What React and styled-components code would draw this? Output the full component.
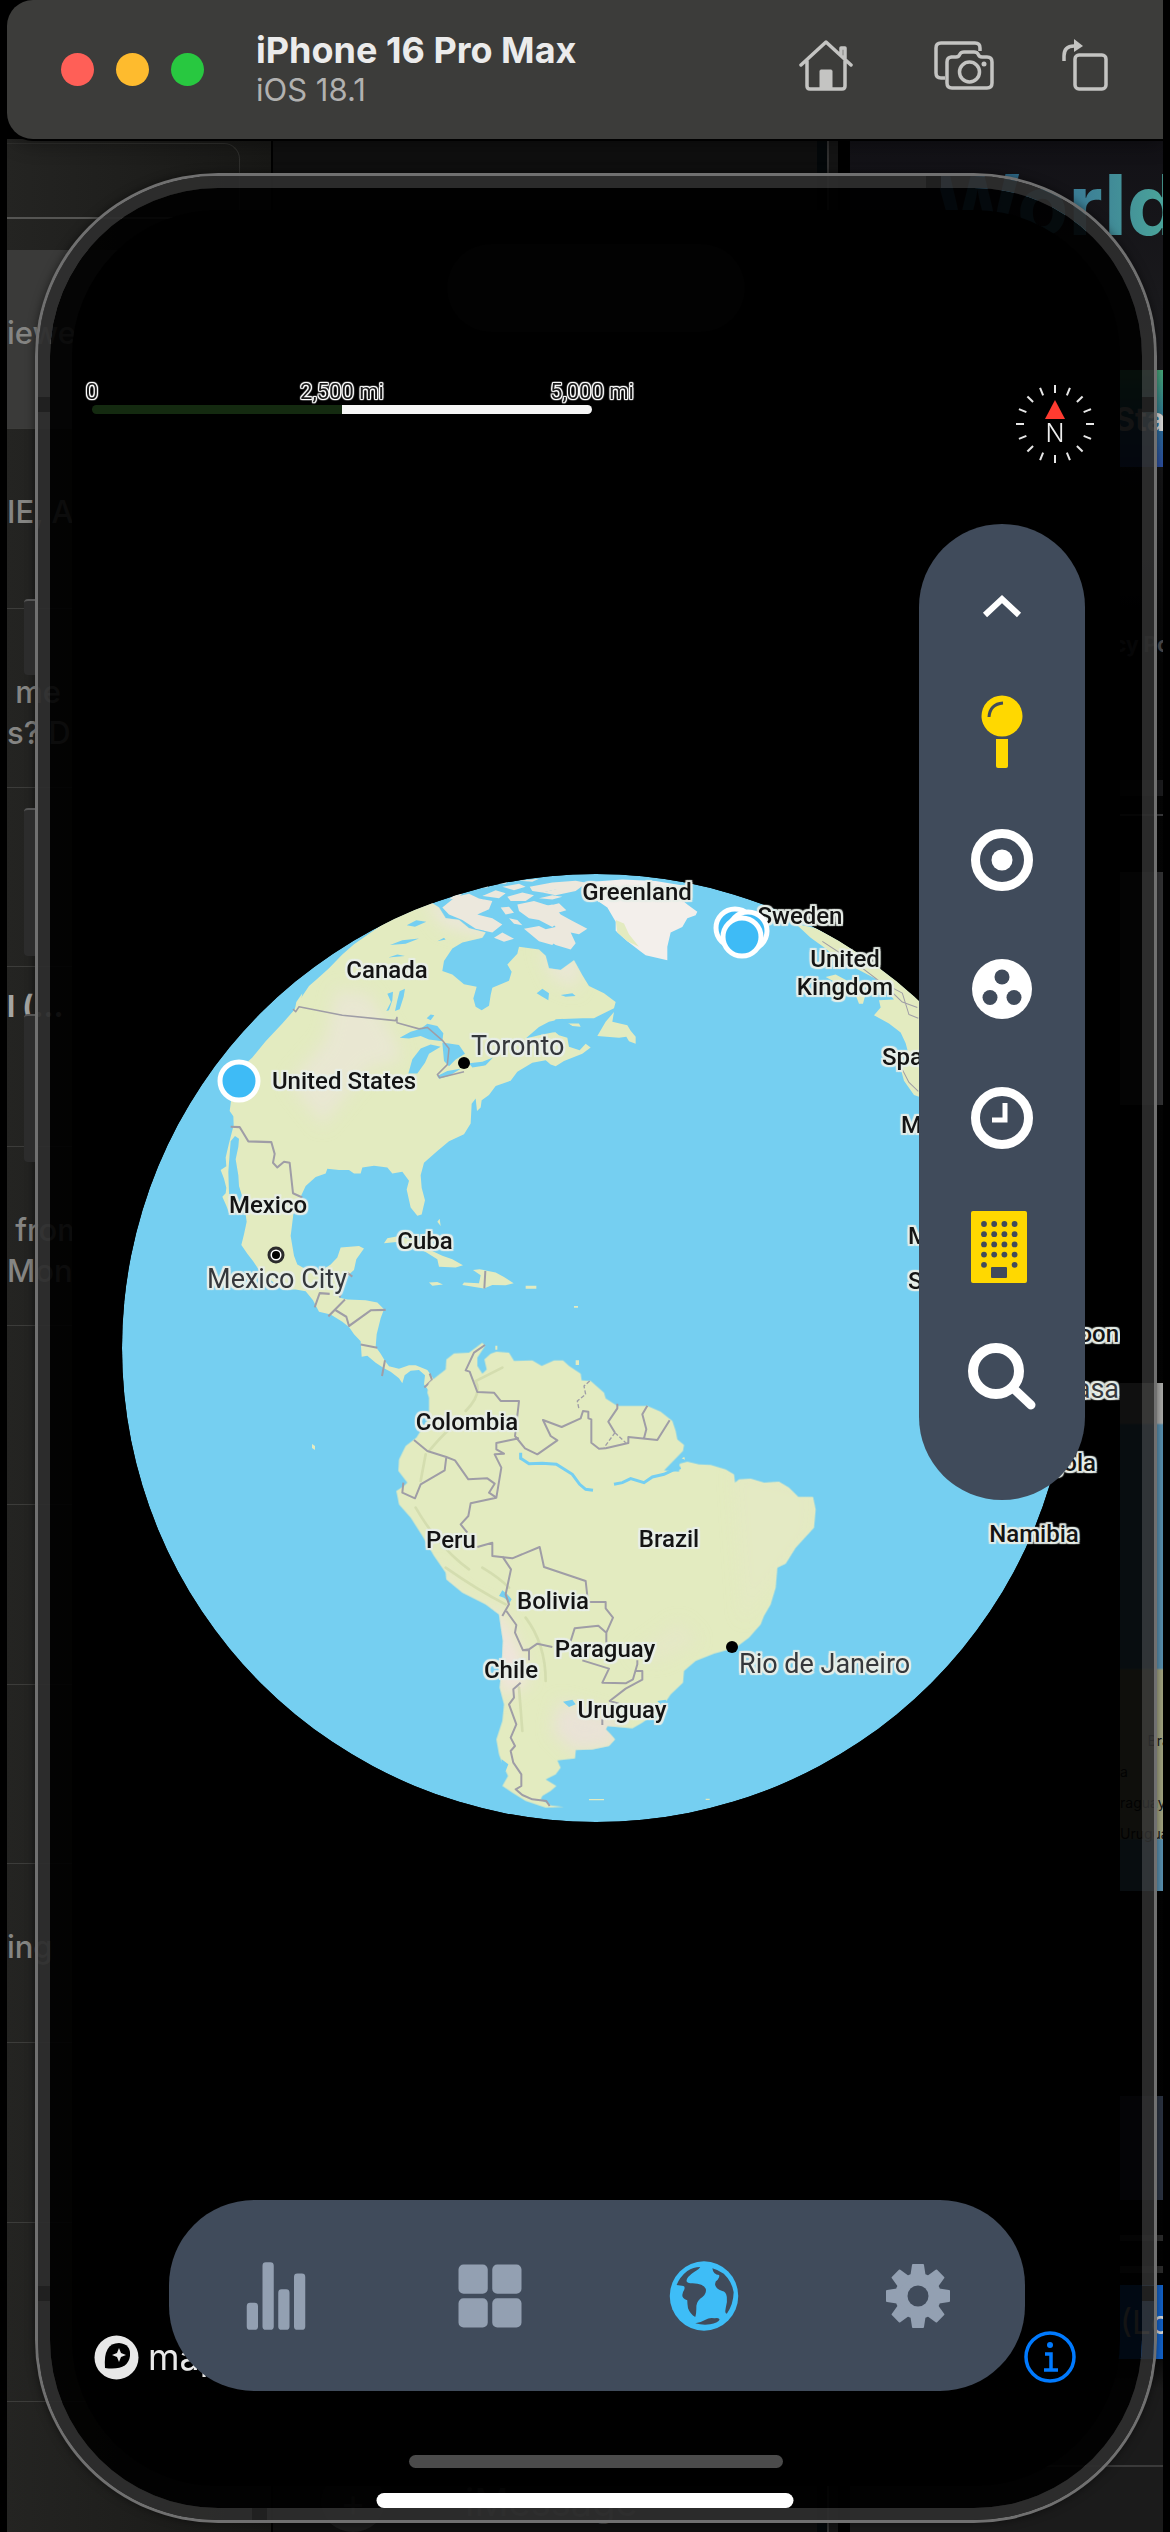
import React from "react";
import styled, { createGlobalStyle } from "styled-components";
import { IoStatsChart, IoGrid } from "react-icons/io5";

const GlobalStyle = createGlobalStyle`
  *, *::before, *::after { box-sizing: border-box; }
  body { margin: 0; background: #000; font-family: Inter, "Liberation Sans", sans-serif; }
  button { border: 0; padding: 0; background: none; color: inherit; font: inherit; cursor: pointer; }
`;

const Page = styled.main`
  position: relative;
  display: flex;
  flex-direction: column;
  min-height: 100vh;
  padding: 0 7px;
  overflow: hidden;
`;

/* Simulator title bar */
const TitleBar = styled.header`
  position: relative;
  z-index: 1;
  display: flex;
  align-items: center;
  height: 139px;
  padding: 0 46px 0 54px;
  background: #3c3c3a;
  border-radius: 26px 0 0 26px;
  box-shadow: 0 1px 0 1px #000, 0 4px 20px rgba(0, 0, 0, 0.4);
`;
const Lights = styled.div`
  display: flex;
  gap: 22px;
  margin-right: 52px;
`;
const Light = styled.button`
  width: 33px;
  height: 33px;
  border-radius: 50%;
  background: ${(p) => p.$color};
`;
const Titles = styled.div`
  flex: 1;
  padding-bottom: 2px;
`;
const DeviceName = styled.h1`
  margin: 0;
  font-size: 36px;
  line-height: 42px;
  font-weight: 700;
  color: #ebebeb;
`;
const OsName = styled.p`
  margin: 0;
  font-size: 31px;
  line-height: 38px;
  color: #b1b1b0;
`;
const BarActions = styled.div`
  display: flex;
  align-items: center;
  gap: 57px;
  margin-top: -8px;
`;
const BarButton = styled.button`
  display: grid;
  place-items: center;
  width: 64px;
  height: 64px;
  margin-right: ${(p) => (p.$wide ? 17 : 0)}px;
  color: #c4c4c2;
`;

/* Windows behind the device */
const Stage = styled.div`
  display: grid;
  grid-template-columns: minmax(0, 1fr);
  flex: 1;
  overflow: hidden;
`;
const Backdrop = styled.div`
  grid-area: 1 / 1;
  display: grid;
  grid-template-columns: 266px minmax(0, 1fr) 313px;
  background: #0f0f0f;
`;
const Sidebar = styled.aside`
  display: flex;
  flex-direction: column;
  overflow: hidden;
  background: linear-gradient(90deg, #242422, #181816);
  border-right: 2px solid #000;
`;
const SearchStrip = styled.div`
  height: 76px;
  margin: 4px 31px 31px 0;
  border: 1px solid #2f2f2d;
  border-left: 0;
  border-bottom: 2px solid #555553;
  border-radius: 0 16px 0 0;
`;
const ChatList = styled.ul`
  flex: 1;
  display: grid;
  grid-auto-rows: 1fr;
  margin: 0 0 130px;
  padding: 0;
  list-style: none;
`;
const Chat = styled.li`
  min-height: 0;
  padding-top: 16px;
  background: ${(p) => (p.$active ? "#3a3a39" : "transparent")};
  border-bottom: 1px solid #3c3c3a;
  white-space: pre;
  color: #858583;
`;
const ChatTitle = styled.strong`
  display: block;
  height: 46px;
  font-size: 30px;
  line-height: 46px;
  color: #a5a5a2;
`;
const ChatText = styled.span`
  display: block;
  font-size: 31px;
  line-height: 41px;
  font-weight: 500;
`;
const Conversation = styled.section`
  display: flex;
  align-items: flex-end;
  justify-content: flex-start;
  gap: 80px;
  padding: 0 0 0 48px;
  border-right: 12px solid #000;
  box-shadow: inset -9px 0 0 #141414, inset -11px 0 0 #303030, inset -21px 0 0 #04080a;
  color: #3a3a3a;
  font-size: 38px;
  line-height: 60px;
`;
const Plus = styled.span`
  width: 64px;
  border-radius: 50%;
  background: #1c1c1c;
  text-align: center;
`;
const Browser = styled.section`
  display: flex;
  flex-direction: column;
  overflow: hidden;
  white-space: nowrap;
  background: linear-gradient(#121116, #1d1d1f 10%, #050505 22%, #020202 92%, #1b1b1b 94%);
`;
const SiteTitle = styled.h2`
  margin: 14px 0 0 84px;
  font-size: 84px;
  line-height: 104px;
  font-weight: 700;
  color: transparent;
  background: linear-gradient(90deg, #235a86 0, #3c7f96 150px, #4aa39a 229px);
  background-clip: text;
`;
const SiteButton = styled.div`
  height: 97px;
  margin-top: 113px;
  padding-left: 264px;
  font-size: 32px;
  line-height: 100px;
  font-weight: 700;
  color: #ddd;
  background: linear-gradient(#46a87a, #2b6c9a 60%, #2c4ea0);
`;
const SiteLink = styled.div`
  margin-top: 166px;
  padding-left: 264px;
  font-size: 21px;
  line-height: 24px;
  font-weight: 700;
  color: #4a4a4e;
`;
const Bar = styled.div`
  height: ${(p) => p.$height}px;
  margin-top: ${(p) => p.$gap}px;
  background: ${(p) => p.$color};
`;
const MiniMap = styled.div`
  height: 508px;
  margin-top: 278px;
  padding: 342px 0 0 270px;
  font-size: 14px;
  line-height: 31px;
  white-space: pre;
  color: #17181a;
  background: linear-gradient(#b0b0ae 40px, #5b93b3 42px, #5b93b3 285px, #a5a784 287px, #a5a784 455px, #5b93b3 457px);
`;
const BlueRow = styled.div`
  height: 74px;
  margin-top: 12px;
  padding-left: 270px;
  font-size: 33px;
  line-height: 74px;
  color: #ddd;
  background: #1263cc;
`;

/* Phone */
const Phone = styled.section`
  grid-area: 1 / 1;
  position: relative;
  display: grid;
  grid-template-columns: minmax(0, 1fr);
  margin: 37px 9px 12px 31px;
  padding: 22px;
  border: 12px solid rgba(45, 45, 45, 0.93);
  border-radius: 180px;
  background: rgba(0, 0, 0, 0.91) padding-box;
  box-shadow: 0 0 0 3px #707070, 0 0 10px 3px rgba(0, 0, 0, 0.5);
`;
const SideKey = styled.i`
  position: absolute;
  left: -26px;
  top: ${(p) => p.$top}px;
  width: 11px;
  height: ${(p) => p.$height}px;
  background: #2c2c2c;
  border-top: 2px solid #555;
  border-radius: 4px 0 0 4px;
`;
const Band = styled.i`
  position: absolute;
  ${(p) => p.$side}: -12px;
  ${(p) => p.$from}: ${(p) => p.$at}px;
  width: ${(p) => (p.$side === "left" || p.$side === "right" ? 12 : 15)}px;
  height: ${(p) => (p.$side === "left" || p.$side === "right" ? 15 : 12)}px;
  background: #202020;
`;
const Screen = styled.div`
  display: grid;
  grid-template-columns: minmax(0, 1fr);
  overflow: hidden;
  border-radius: 146px;
  background: #000;
`;
const MapLayer = styled.div`
  grid-area: 1 / 1;
  display: grid;
  place-items: center;
`;
const Globe = styled.div`
  position: relative;
  width: 948px;
  height: 948px;
  svg { display: block; overflow: visible; }
`;
const HALO = [[2, 0], [-2, 0], [0, 2], [0, -2], [2, 2], [-2, 2], [2, -2], [-2, -2], [0, 0]];
const halo = (color, blur) => HALO.map(([x, y]) => `${x}px ${y}px ${blur}px ${color}`).join(",");

const PlaceLabel = styled.span`
  position: absolute;
  left: ${(p) => p.$x}px;
  top: ${(p) => p.$y}px;
  transform: translate(${(p) => (p.$anchor === "start" ? "0" : p.$anchor === "end" ? "-100%" : "-50%")}, -50%);
  font-family: Roboto, "Liberation Sans", sans-serif;
  font-size: ${(p) => (p.$city ? 27 : 24)}px;
  line-height: 28px;
  font-weight: ${(p) => (p.$city ? 400 : 500)};
  color: ${(p) => (p.$city ? "#35383c" : "#141414")};
  white-space: pre;
  text-align: center;
  text-shadow: ${halo("rgba(232, 238, 232, 0.95)", 1)};
`;

const Controls = styled.div`
  grid-area: 1 / 1;
  position: relative;
  z-index: 1;
  display: flex;
  flex-direction: column;
  padding: 34px 0 18px;
`;
const Island = styled.div`
  align-self: center;
  width: 298px;
  height: 88px;
  border-radius: 44px;
  background: #020202;
`;
const MapHeader = styled.div`
  display: flex;
  justify-content: space-between;
  align-items: flex-start;
  padding: 50px 23px 0 11px;
`;
const Scale = styled.div`
  width: 518px;
`;
const ScaleLabels = styled.div`
  display: grid;
  grid-template-columns: 18px 1fr 18px;
  justify-items: center;
  white-space: nowrap;
  font-family: Roboto, "Liberation Sans", sans-serif;
  font-size: 22px;
  line-height: 20px;
  color: #1c1c1c;
  text-shadow: ${HALO.map(([x, y]) => `${x / 2}px ${y / 2}px 1px #fff`).join(",")};
`;
const ScaleTrack = styled.div`
  width: 500px;
  height: 9px;
  margin: 3px 0 0 9px;
  border-radius: 5px;
  background: linear-gradient(90deg, #142a10 50%, #f6f6f6 50%);
`;
const CompassButton = styled.button`
  position: relative;
  display: grid;
  width: 84px;
  height: 84px;
  svg { grid-area: 1 / 1; }
`;
const North = styled.span`
  grid-area: 1 / 1;
  align-self: end;
  margin-bottom: 20px;
  font-size: 25px;
  line-height: 26px;
  font-weight: 300;
  color: #eee;
`;
const ToolPanel = styled.div`
  align-self: flex-end;
  display: flex;
  flex-direction: column;
  width: 166px;
  margin: 58px 35px 0 0;
  padding: 13px 0 60px;
  border-radius: 83px;
  background: #404b5b;
`;
const ToolButton = styled.button`
  display: grid;
  place-items: center;
  height: 129px;
  color: ${(p) => (p.$active ? "#ffd800" : "#fff")};
`;
const Footer = styled.footer`
  display: grid;
  grid-template-columns: minmax(0, 1fr);
  margin-top: auto;
`;
const Attribution = styled.div`
  grid-area: 1 / 1;
  display: flex;
  align-items: center;
  align-self: end;
  justify-content: space-between;
  padding: 0 43px 7px 22px;
`;
const Brand = styled.a`
  display: flex;
  align-items: center;
  gap: 9px;
  color: #e8e8e8;
  font-size: 36px;
  line-height: 42px;
  text-decoration: none;
`;
const InfoButton = styled.button`
  width: 54px;
  height: 54px;
`;
const TabBar = styled.nav`
  grid-area: 1 / 1;
  position: relative;
  display: grid;
  grid-template-columns: repeat(4, 1fr);
  height: 191px;
  margin: 0 95px 0 97px;
  border-radius: 85px;
  background: #404b5b;
`;
const Tab = styled.button`
  display: grid;
  place-items: center;
  color: ${(p) => (p.$active ? "#3ebdf7" : "#93a0b2")};
`;
const Indicator = styled.div`
  align-self: center;
  width: 374px;
  height: 13px;
  margin-top: 64px;
  border-radius: 7px;
  background: #4b4b4b;
`;
const HomeBar = styled.div`
  position: absolute;
  bottom: 24px;
  left: 50%;
  width: 417px;
  height: 15px;
  transform: translateX(-50%);
  border-radius: 8px;
  background: #fff;
`;

const LAND = "#e3ebc0";
const WATER = "#75cff1";

function World() {
  return (
    <svg width="948" height="948" viewBox="123 873 948 948" aria-hidden="true">
      <defs>
        <clipPath id="disc"><circle cx="597" cy="1347" r="474" /></clipPath>
        <filter id="soft" x="-30%" y="-30%" width="160%" height="160%"><feGaussianBlur stdDeviation="24" /></filter>
        <clipPath id="south">
          <path d={SOUTH} />
        </clipPath>
        <clipPath id="north">
          <path d={NORTH} />
        </clipPath>
      </defs>
      <g clipPath="url(#disc)">
        <circle cx="597" cy="1347" r="474" fill={WATER} />
        <g transform="translate(110 860) scale(.33333 .35714)">
          <path fill={LAND} d={NORTH} />
          <g clipPath="url(#north)" >
            <g filter="url(#soft)" fill="#ebe6da">
              <path d="M680 360L780 370L860 500L880 560L780 580L640 740L540 620L650 500Z" opacity=".7" />
              <path d="M940 100L1160 150L1200 215L1090 205L1000 180Z" />
              <path d="M1290 240L1430 270L1400 360L1330 330Z" opacity=".8" />
            </g>
          </g>
          <g fill="#ece8dd">
            <path d="M1000 130L1040 100L1080 92L1110 105L1150 112L1140 135L1105 150L1150 160L1180 178L1150 200L1100 190L1060 165L1020 150Z" />
            <path d="M1120 98L1160 82L1190 90L1170 104ZM1180 72L1230 64L1250 72L1215 82ZM1195 100L1240 88L1275 96L1250 112L1205 112ZM1262 72L1330 60L1400 55L1440 62L1400 76L1340 80L1300 88L1270 84ZM1225 122L1275 112L1320 125L1350 118L1372 138L1330 150L1350 170L1330 185L1290 165L1260 160L1230 140ZM1155 215L1180 200L1215 218L1185 226ZM1175 130L1200 128L1215 145L1190 150Z" />
            <path d="M1245 190L1290 182L1320 195L1345 215L1330 235L1290 225ZM1290 130L1330 122L1355 150L1385 165L1435 190L1410 205L1385 200L1400 230L1385 248L1340 235L1300 212L1290 195L1340 185Z" />
            <path d="M1300 88L1370 72L1420 70L1400 84L1340 96ZM1290 104L1330 96L1360 100L1330 108Z" />
            <path d="M1050 82L1080 76L1075 84ZM1100 74L1140 66L1135 74ZM1160 62L1200 56L1190 64ZM1230 55L1290 50L1270 58ZM1060 92L1035 96L1020 108L1045 104ZM1200 160L1225 165L1240 180L1215 176Z" />
          </g>
          <path fill="#f3efeb" d="M1420 75L1450 58L1540 52L1640 56L1730 70L1750 95L1720 110L1735 122L1765 142L1760 152L1735 160L1720 185L1685 200L1675 240L1675 278L1610 264L1590 250L1555 225L1520 195L1520 170L1495 130L1460 108Z" />
          <path fill={LAND} d="M1520 165L1545 175L1560 205L1590 240L1555 225L1525 200Z" />
          <path fill={LAND} d="M1465 490L1490 450L1515 423L1510 450L1555 460L1565 475L1580 492L1580 512L1560 505L1552 492L1530 495ZM1375 455L1410 455L1415 464L1390 462Z" />
          <path fill={LAND} d="M2060 176L2120 188L2220 235L2430 370L2430 660L2415 655L2385 615L2373 575L2400 545L2390 510L2375 480L2340 455L2295 432L2315 410L2310 390L2355 388L2330 360L2300 330L2240 300L2190 280L2150 245L2105 215Z" />
          <path fill={LAND} d="M2150 325L2180 318L2215 335L2250 350L2270 372L2262 400L2250 400L2240 375L2200 350Z" />
          <g fill={LAND}>
            <path d="M825 1070L835 1056L870 1050L910 1062L960 1088L1000 1105L1030 1115L1062 1132L1040 1138L990 1136L985 1115L950 1095L870 1066Z" />
            <path d="M1092 1145L1112 1143L1160 1152L1185 1165L1214 1182L1190 1188L1150 1187L1125 1197L1060 1187L1065 1180L1110 1182L1115 1160ZM960 1180L985 1179L1002 1186L970 1189ZM1250 1189H1282V1198H1250ZM985 1010L992 1002L995 1022ZM1395 1246H1407V1251H1395Z" />
            <path d="M580 370L575 400L558 415L562 395Z" />
          </g>
          <g fill={WATER}>
            <path d="M872 495L905 478L935 470L955 456L985 462L1003 482L1000 505L960 500L935 490L900 497ZM953 440L965 430L976 432L965 446ZM898 595L910 555L935 525L965 514L995 520L960 540L948 565L925 595ZM1000 508L1050 515L1068 540L1040 556L1020 575L1005 560ZM985 602L1015 588L1055 582L1020 602L990 610ZM1080 566L1120 562L1152 550L1130 572L1090 578Z" />
            <path d="M1250 497L1290 465L1320 450L1360 442L1400 470L1365 477L1330 480L1290 488ZM832 420L846 395L835 372L852 366L850 390L840 418ZM858 420L865 390L872 365L888 358L884 380L872 415ZM843 235L880 222L930 217L890 232ZM893 180L922 166L952 170L918 184ZM838 270L865 262L888 266ZM985 225L1005 215L1010 220ZM1283 370L1300 358L1320 370L1318 390L1300 380ZM1355 375L1390 370L1400 378L1370 380Z" />
          </g>
          <g fill="none" stroke="#9f9da6" strokeWidth="6" strokeLinejoin="round">
            <path strokeWidth="4.500" d="M552 415L560 422L570 408L700 432L860 447L864 438L864 453L930 470L955 466L1000 502L1020 525L1015 570L985 598L992 607L1065 590" />
            <path d="M365 744L392 745L418 785L487 787L497 820L492 845L505 858L525 842L542 845L552 930L580 942M617 1250L632 1210L662 1212M692 1222L708 1168L718 1155L730 1164M658 1275L708 1228M680 1258L712 1276L720 1302L785 1258L830 1257M755 1354L805 1363M828 1398L819 1442M962 1435L969 1453L946 1474M1129 1148L1126 1197" />
            <path strokeWidth="3" d="M2140 225L2200 262L2260 300L2330 350L2380 395L2425 410M2300 330L2380 370L2400 430L2428 440M2375 575L2400 620L2428 645" />
          </g>
        </g>
        <g transform="translate(360 1320) scale(.33333)">
          <path fill={LAND} d={SOUTH} />
          <g clipPath="url(#south)">
            <g filter="url(#soft)">
              <path fill="#f0e4de" d="M225 720L300 820L430 880L480 980L510 1080L430 1130L395 880L260 800Z" />
              <path fill="#e9e2d6" d="M600 1140L780 1190L770 1280L640 1290L580 1230Z" />
              <path fill="#e8e6ce" d="M960 900L1020 960L900 1020L820 1000Z" opacity=".5" />
              <path fill="#e8e8cc" d="M1120 440L1370 500L1360 640L1150 900Z" opacity=".3" />
            </g>
            <path fill="none" stroke="#c9d3a4" strokeWidth="8" opacity=".6" strokeLinecap="round" d="M320 270Q370 220 350 180L430 140M210 390Q260 330 290 310M185 480L200 400M170 560Q240 680 330 745M260 740Q360 810 440 850M500 890Q560 970 560 1080M480 1100L490 1230M370 740Q420 770 450 800" />
          </g>
          <path fill={WATER} d="M420 825L430 808L445 820L458 835L452 845L435 830ZM612 1142L640 1136L650 1150L630 1158ZM895 1140L920 1136L925 1146L905 1152ZM428 1315L448 1330L440 1350L425 1345Z" />
          <path fill="none" stroke={WATER} strokeWidth="9" d="M485 395V412L510 428L550 427L592 430L640 460L662 490L680 505L702 508M765 490L790 485L815 473L855 485L880 468L915 460L940 448L965 440" />
          <path fill={LAND} d="M650 118H660V132H650ZM690 1434H735V1438H690ZM1040 1433H1052V1437H1040ZM409 74H415V86H409ZM968 412L976 408L978 416Z" />
          <g fill="none" stroke="#9f9da6" strokeWidth="6" strokeLinejoin="round">
            <path d="M378 72L345 95L320 148L332 152L355 213L405 215L425 240L480 240L468 345L498 382L535 400L595 358L575 345L552 297L608 318L665 292L672 270L688 272V292L697 295V365L720 383L740 382L808 366V348L895 357L932 298M775 248V262L748 302L768 335M865 254L850 280L862 325L855 352M165 357L205 390L262 408L288 418L328 475L385 472L407 488L390 515L412 530L427 440L407 400L435 398L412 385V366L480 352M262 408L257 448L185 490L168 532L130 515L133 485M412 530L335 547L328 585L305 610L325 635M355 678L400 665V705L460 712L542 678L555 738L680 780L687 843H740V862L762 890L742 935V965M430 706L456 745L440 820L450 850L430 885M442 870L472 912L468 935L492 988H510V1018M492 988L510 985L535 968L580 978M635 960L647 922L718 914L742 935M670 1018L750 1043L730 1085L800 1087L822 1075L835 1030V1018M830 1050H850V1076L800 1103L752 1140L780 1148M485 1085L463 1105L465 1130L450 1150L472 1210L455 1250L468 1275L455 1290L463 1325L487 1360V1395L470 1405L490 1422L520 1435L562 1440L572 1455M730 1195V1212" />
            <path strokeWidth="4" strokeDasharray="12 6" d="M692 180L675 195L680 220L655 240L660 265M768 335L800 365M768 335L735 380" />
          </g>
        </g>
      </g>
      <path d="M313 1443l3 2v4l-3-2z" fill={LAND} />
      <circle cx="465" cy="1062" r="6" /><circle cx="733" cy="1646" r="6" />
      <circle cx="277" cy="1254" r="7" fill="#fff" stroke="#2b2b2b" strokeWidth="3" /><circle cx="277" cy="1254" r="4" />
    </svg>
  );
}

const NORTH =
  "M735 233L700 262L660 300L625 330L600 350L580 378L555 418L520 455L470 505L430 550L395 580L370 640L365 680L362 700L373 715L374 740L360 790L350 830L352 855L335 865L345 890L352 915L350 930L340 940L352 965L362 990L358 870L365 785L378 770L390 778L388 800L380 835L388 880L390 910L400 940L410 990L413 1010L405 1045L397 1075L415 1100L432 1120L450 1145L480 1170L520 1200L560 1200L590 1205L612 1230L630 1262L665 1270L700 1290L720 1305L735 1325L755 1345L758 1388L775 1385L800 1405L825 1420L845 1430L870 1448L880 1462L887 1440L905 1427L930 1425L948 1440L945 1465L958 1482L985 1470L970 1445L955 1425L920 1412L900 1412L870 1422L840 1415L828 1400L815 1380L800 1360L803 1325L815 1280L825 1255L805 1236L770 1230L715 1228L690 1222L700 1190L712 1165L735 1145L742 1115L765 1085L750 1078L695 1082L685 1110L665 1130L640 1145L595 1145L565 1130L555 1105L545 1050L553 990L575 940L590 910L620 885L650 875L655 862L690 865L720 865L735 875L755 875L760 858L795 853L835 858L850 875L880 870L900 895L893 920L905 970L925 993L938 990L948 950L938 915L935 880L945 845L985 812L1020 785L1065 765L1085 735L1088 680L1100 665L1104 700L1115 690L1118 670L1140 655L1160 630L1205 615L1225 590L1270 565L1310 558L1325 570L1340 575L1365 560L1420 540L1445 522L1430 512L1412 530L1380 520L1375 495L1350 488L1340 480L1330 455L1340 443L1420 440L1455 440L1515 412L1520 395L1485 370L1440 350L1420 320L1395 278L1385 285L1355 305L1320 300L1310 265L1290 248L1230 240L1225 260L1195 290L1208 310L1200 335L1150 355L1145 375L1140 405L1118 418L1100 408L1093 385L1103 352L1065 345L1030 318L1000 308L1005 280L1030 245L1060 228L1120 215L1130 200L1080 188L1050 165L1010 160L990 130L940 100Z";
const SOUTH =
  "M205 215L210 185L235 165L260 145L262 115L285 97L330 95L370 65L378 75L355 110L355 135L370 158L383 145L376 115L395 98L412 92L450 95L465 120L520 118L548 135L585 118L612 118L630 135L665 158L668 178L695 180L735 215L740 232L775 255L865 255L905 272L940 300L950 330L955 355L975 372L972 390L915 448L960 452L962 428L985 422L1020 430L1055 432L1100 445L1125 460L1128 485L1140 475L1175 473L1215 485L1260 482L1290 500L1318 528L1362 528L1370 565L1365 620L1310 680L1280 728L1255 740L1250 800L1235 850L1215 885L1205 910L1170 950L1130 980L1065 998L1010 1020L975 1050L972 1085L935 1120L905 1165L850 1205L820 1222L745 1215L740 1225L755 1240L768 1255L750 1275L700 1285L650 1287L648 1312L595 1318L605 1340L590 1360L560 1375L592 1395L575 1410L550 1425L545 1435L575 1453L615 1458L560 1460L500 1440L460 1415L430 1395L447 1365L435 1340L420 1300L412 1255L430 1200L435 1150L422 1100L428 1040L432 960L420 880L380 850L310 815L262 775L260 755L225 705L190 645L155 590L120 550L112 510L135 495L145 485L118 450L120 415L140 375L172 350L210 290L210 230Z";

const PLACES = [
  ["Greenland", 638, 891], ["Sweden", 801, 915], ["United\nKingdom", 846, 972], ["Canada", 388, 969],
  ["United States", 345, 1080], ["Mexico", 269, 1204], ["Cuba", 426, 1240], ["Colombia", 468, 1421],
  ["Peru", 452, 1539], ["Brazil", 670, 1538], ["Bolivia", 554, 1600], ["Paraguay", 606, 1648],
  ["Chile", 512, 1669], ["Uruguay", 623, 1709], ["Namibia", 1035, 1533],
  ["Spain", 883, 1056, "start"], ["Morocco", 902, 1124, "start"], ["Mali", 909, 1235, "start"],
  ["Senegal", 909, 1280, "start"], ["Cameroon", 1120, 1333, "end"], ["Angola", 1097, 1462, "end"],
];
const CITIES = [
  ["Toronto", 472, 1045, "start"], ["Mexico City", 278, 1278, "middle"],
  ["Rio de Janeiro", 740, 1663, "start"], ["Kinshasa", 1120, 1388, "end"],
];
const PINS = [[240, 1080], [736, 927], [749, 930], [743, 936]];

const PinLayer = styled.svg`
  position: absolute;
  inset: 0;
`;

const ring = { fill: "none", stroke: "currentColor" };

const TOOLS = [
  ["Collapse", false, <path key="a" {...ring} strokeWidth="6" d="M18 48L35 32L52 48" />],
  ["Pins", true, <g key="a" fill="currentColor"><circle cx="35" cy="20" r="20.500" /><path d="M29 43h12v27q0 2-2 2h-8q-2 0-2-2z" /><path d="M22 21Q23 8 36 7" fill="none" stroke="#404b5b" strokeWidth="3" /></g>],
  ["Radius", false, <g key="a"><circle cx="35" cy="35" r="26.500" {...ring} strokeWidth="9" /><circle cx="35" cy="35" r="10.500" fill="currentColor" /></g>],
  ["Clusters", false, <g key="a"><circle cx="35" cy="35" r="30" fill="currentColor" /><g fill="#404b5b"><circle cx="35" cy="23" r="7.500" /><circle cx="23" cy="43.500" r="7.500" /><circle cx="47" cy="43.500" r="7.500" /></g></g>],
  ["History", false, <g key="a"><circle cx="35" cy="35" r="26.500" {...ring} strokeWidth="9" /><path d="M38 20V37H25" {...ring} strokeWidth="5" /></g>],
  ["Buildings", true, <g key="a"><rect x="4" y="-1" width="56" height="72" rx="2" fill="currentColor" /><g fill="#404b5b">
    {[0, 1, 2, 3, 4].flatMap((r) => [0, 1, 2, 3].filter((c) => r < 4 || c === 0 || c === 3).map((c) => (
      <circle key={`${r}${c}`} cx={17 + c * 10.2} cy={12 + r * 10.2} r="2.900" />
    )))}
    <rect x="24" y="55" width="16" height="11" rx="1" /></g></g>],
  ["Search", false, <g key="a"><circle cx="29" cy="30" r="23" {...ring} strokeWidth="10" /><path d="M46 47L64 64" {...ring} strokeWidth="9" strokeLinecap="round" /></g>],
];

const EarthIcon = () => (
  <svg width="70" height="70" viewBox="256 388 184 210" preserveAspectRatio="none" aria-hidden="true">
    <ellipse cx="348" cy="493" rx="90" ry="104" fill="currentColor" />
    <g fill="#404b5b">
      <path d="M276 460Q284 436 304 418Q320 406 338 406Q336 412 322 421Q302 436 302 448Q303 455 318 455Q346 456 353 472Q355 486 344 496Q330 506 328 522Q328 546 325 556Q312 548 306 530Q304 515 304 506Q290 500 291 490Q292 480 296 474Q300 462 290 462Z" />
      <path d="M370 410Q386 415 400 426Q422 450 426 482Q425 520 408 546Q402 546 405 530Q410 512 408 496Q406 480 396 478Q378 472 377 458Q377 448 384 444Q390 438 388 430Q372 430 370 410Z" />
      <path d="M325 575Q340 572 352 564Q362 557 376 560Q388 557 389 564Q384 573 364 578Q344 581 325 575Z" />
    </g>
  </svg>
);
const GearIcon = () => (
  <svg width="64" height="64" viewBox="-32 -32 64 64" aria-hidden="true">
    <circle r="23" fill="currentColor" />
    {Array.from({ length: 8 }, (_, i) => (
      <path key={i} d="M-8 -18L-6 -31Q-6 -32 -5 -32H5Q6 -32 6 -31L8 -18Z" fill="currentColor" transform={`rotate(${i * 45})`} />
    ))}
    <circle r="10.500" fill="#404b5b" />
  </svg>
);

const TABS = [
  ["Statistics", <IoStatsChart key="i" size={72} />], ["Gallery", <IoGrid key="i" size={72} />],
  ["Map", <EarthIcon key="i" />], ["Settings", <GearIcon key="i" />],
];

const CHATS = [
  { lines: ["iewer"], active: true }, { lines: ["IE, A"] }, { lines: [" me", "s? Do"] }, {},
  { title: "l (…" }, { lines: [" from", "Monic"] }, {}, {}, {}, { lines: ["ing"] }, {}, {},
];

export default function App() {
  return (
    <Page>
      <GlobalStyle />
      <TitleBar>
        <Lights>
          <Light $color="#ff5f57" aria-label="Close" />
          <Light $color="#febb2e" aria-label="Minimize" />
          <Light $color="#28c840" aria-label="Zoom" />
        </Lights>
        <Titles>
          <DeviceName>iPhone 16 Pro Max</DeviceName>
          <OsName>iOS 18.1</OsName>
        </Titles>
        <BarActions>
          <BarButton aria-label="Home" $wide>
            <svg width="54" height="54" viewBox="0 -2 54 54" {...ring} strokeWidth="3.500" strokeLinecap="round" strokeLinejoin="round">
              <path d="M2 24L27 1L52 24M8 20V45Q8 48 11 48H43Q46 48 46 45V20M42 14V7H46V18" />
              <path d="M21 47V30Q21 29 22 29H32Q33 29 33 30V47Z" fill="currentColor" strokeWidth="1" />
            </svg>
          </BarButton>
          <BarButton aria-label="Screenshot">
            <svg width="60" height="50" viewBox="0 0 60 50" {...ring} strokeWidth="3.500" strokeLinejoin="round">
              <path d="M11 37H7Q2 37 2 32V7Q2 2 7 2H41Q46 2 46 7V10" />
              <path d="M17 16H22Q25 16 26 13Q27 11 30 11H40Q43 11 44 13Q45 16 48 16H53Q58 16 58 21V42Q58 47 53 47H18Q13 47 13 42V21Q13 16 18 16Z" />
              <circle cx="35.500" cy="31" r="10" />
              <circle cx="50" cy="23" r="2.500" fill="currentColor" stroke="none" />
            </svg>
          </BarButton>
          <BarButton aria-label="Rotate">
            <svg width="46" height="58" viewBox="0 -4 46 58" {...ring} strokeWidth="3.500">
              <rect x="13" y="14" width="31" height="34" rx="4" />
              <path d="M2 20V15Q2 5 12 5H14" />
              <path d="M12 -2L21 5L12 11Z" fill="currentColor" stroke="none" />
            </svg>
          </BarButton>
        </BarActions>
      </TitleBar>

      <Stage>
        <Backdrop>
          <Sidebar>
            <SearchStrip />
            <ChatList>
              {CHATS.map((c, i) => (
                <Chat key={i} $active={c.active}>
                  <ChatTitle>{c.title}</ChatTitle>
                  {(c.lines || []).map((l, n) => <ChatText key={n}>{l}</ChatText>)}
                </Chat>
              ))}
            </ChatList>
          </Sidebar>
          <Conversation><Plus>+</Plus><span>iMessage</span></Conversation>
          <Browser>
            <SiteTitle>World</SiteTitle>
            <SiteButton>Start</SiteButton>
            <SiteLink>cy Policy</SiteLink>
            <Bar $gap={123} $height={16} $color="#1c1c1e" />
            <Bar $gap={18} $height={2} $color="#3a3a3c" />
            <Bar $gap={56} $height={233} $color="#333335" />
            <MiniMap>{"       Brazil\na\nraguay\nUruguay"}</MiniMap>
            <Bar $gap={205} $height={104} $color="#2b3342" />
            <Bar $gap={35} $height={6} $color="#2c2c2c" />
            <Bar $gap={25} $height={7} $color="#2c2c2c" />
            <BlueRow>(Lo</BlueRow>
            <Bar $gap={106} $height={2} $color="#3a3a3a" />
          </Browser>
        </Backdrop>

        <Phone aria-label="Device">
          <SideKey $top={411} $height={76} />
          <SideKey $top={620} $height={148} />
          <SideKey $top={826} $height={148} />
          <Band $side="left" $from="top" $at={209} />
          <Band $side="right" $from="top" $at={209} />
          <Band $side="top" $from="right" $at={201} />
          <Band $side="left" $from="bottom" $at={207} />
          <Band $side="right" $from="bottom" $at={207} />
          <Band $side="bottom" $from="left" $at={202} />
          <Screen>
            <MapLayer>
              <Globe>
                <World />
                {PLACES.map(([name, x, y, anchor]) => (
                  <PlaceLabel key={name} $x={x - 123} $y={y - 873} $anchor={anchor}>{name}</PlaceLabel>
                ))}
                {CITIES.map(([name, x, y, anchor]) => (
                  <PlaceLabel key={name} $city $x={x - 123} $y={y - 873} $anchor={anchor}>{name}</PlaceLabel>
                ))}
                <PinLayer width="948" height="948" viewBox="123 873 948 948" aria-hidden="true">
                  {PINS.map(([x, y]) => (
                    <circle key={x} cx={x} cy={y} r="19" fill="#3ebbf6" stroke="#fff" strokeWidth="5" />
                  ))}
                </PinLayer>
              </Globe>
            </MapLayer>

            <Controls>
              <Island />
              <MapHeader>
                <Scale>
                  <ScaleLabels><span>0</span><span>2,500 mi</span><span>5,000 mi</span></ScaleLabels>
                  <ScaleTrack />
                </Scale>
                <CompassButton aria-label="Reset north">
                  <svg width="84" height="84" viewBox="-42 -42 84 84" aria-hidden="true">
                    {Array.from({ length: 16 }, (_, i) => (
                      <path key={i} d="M0 -39V-31" stroke="#e6e6e6" strokeWidth="2" transform={`rotate(${i * 22.5})`} />
                    ))}
                    <path d="M0 -24L10 -5H-10Z" fill="#ff3b30" />
                  </svg>
                  <North>N</North>
                </CompassButton>
              </MapHeader>
              <ToolPanel>
                {TOOLS.map(([name, active, art]) => (
                  <ToolButton key={name} aria-label={name} $active={active}>
                    <svg width="70" height="70" viewBox="0 0 70 70" overflow="visible" aria-hidden="true">{art}</svg>
                  </ToolButton>
                ))}
              </ToolPanel>
              <Footer>
                <Attribution>
                  <Brand href="#mapbox">
                    <svg width="45" height="45" viewBox="0 0 45 45" aria-hidden="true">
                      <circle cx="22.500" cy="22.500" r="22" fill="#e8e8e8" />
                      <path d="M11 33Q9 8 25 8Q37 9 36 21Q34 36 11 33Z" fill="#000" />
                      <path d="M25 13L27 18L32 20L27 22L25 27L23 22L18 20L23 18Z" fill="#e8e8e8" />
                    </svg>
                    mapbox
                  </Brand>
                  <InfoButton aria-label="Map information">
                    <svg width="54" height="54" viewBox="0 0 54 54" fill="none" stroke="#007aff" strokeWidth="3.500" aria-hidden="true">
                      <circle cx="27" cy="27" r="24" />
                      <path d="M22 24H28V40M21 40H35" />
                      <circle cx="27" cy="15" r="3" fill="#007aff" stroke="none" />
                    </svg>
                  </InfoButton>
                </Attribution>
                <TabBar>
                  {TABS.map(([name, icon]) => (
                    <Tab key={name} aria-label={name} $active={name === "Map"}>{icon}</Tab>
                  ))}
                </TabBar>
              </Footer>
              <Indicator />
            </Controls>
          </Screen>
        </Phone>
      </Stage>
      <HomeBar />
    </Page>
  );
}
